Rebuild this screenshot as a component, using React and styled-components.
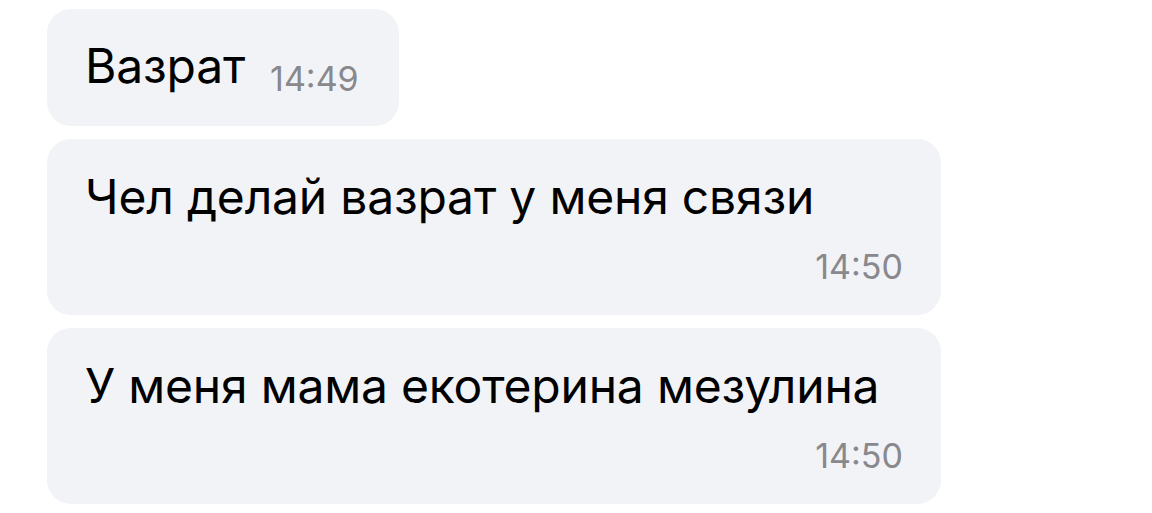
import React from "react";
import styled, { createGlobalStyle } from "styled-components";

const Global = createGlobalStyle`
  html, body { margin: 0; padding: 0; background: #ffffff; }
  body { font-family: Inter, "Noto Sans", "DejaVu Sans", sans-serif; }
`;

const Chat = styled.div`
  display: flex;
  flex-direction: column;
  gap: 13px;
  width: 894px;
  padding: 9px 0 0 47px;
`;

const Bubble = styled.div`
  background: #f2f3f7;
  border-radius: 24px;
  box-sizing: border-box;
  display: flex;
  flex-direction: ${(p) => (p.$inline ? "row" : "column")};
  align-items: ${(p) => (p.$inline ? "flex-end" : "stretch")};
  align-self: ${(p) => (p.$inline ? "flex-start" : "stretch")};
  gap: ${(p) => (p.$inline ? "25px" : "20px")};
  padding: ${(p) => (p.$inline ? "28px 40px 27px 38px" : "29px 38px 28px 38px")};
`;

const Text = styled.div`
  font-size: 48px;
  line-height: 58px;
  letter-spacing: -0.2px;
  color: #000000;
  margin-bottom: ${(p) => (p.$inline ? "4px" : "0")};
`;

const Time = styled.div`
  font-size: 34px;
  line-height: 41px;
  color: #88888d;
  align-self: flex-end;
`;

const messages = [
  { text: "Вазрат", time: "14:49", inline: true },
  { text: "Чел делай вазрат у меня связи", time: "14:50" },
  { text: "У меня мама екотерина мезулина", time: "14:50" },
];

export default function App() {
  return (
    <>
      <Global />
      <Chat>
        {messages.map((m, i) => (
          <Bubble key={i} $inline={m.inline}>
            <Text $inline={m.inline}>{m.text}</Text>
            <Time>{m.time}</Time>
          </Bubble>
        ))}
      </Chat>
    </>
  );
}
